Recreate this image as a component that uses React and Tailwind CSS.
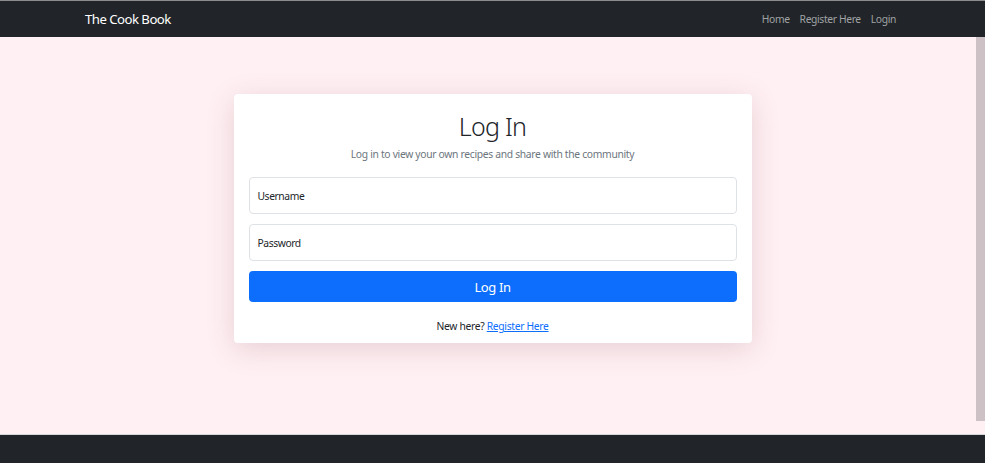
import React from "react";

export default function App() {
  return (
    <div className="relative flex h-[463px] w-[985px] flex-col overflow-hidden bg-[#fff0f3] font-['Noto_Sans',sans-serif] tracking-[-0.02em]">
      <div className="h-px bg-[#8c8c8c]" />
      <nav className="flex h-[36px] items-center justify-between bg-[#212529] pl-[85px] pr-[89px] pt-[2px]">
        <span className="text-[13.2px] tracking-[-0.04em] text-white">The Cook Book</span>
        <div className="flex gap-[10px] text-[10.3px] tracking-[-0.035em] text-[#a0a2a4]">
          <span>Home</span>
          <span>Register Here</span>
          <span>Login</span>
        </div>
      </nav>
      <main className="flex flex-1 justify-center pt-[57px]">
        <div className="flex h-[249px] w-[518px] flex-col items-center rounded-[4px] bg-white px-[15px] shadow-[0_6px_28px_rgba(120,60,80,0.18)]">
          <h1 className="mt-[16px] text-[25px] font-light leading-[32px] tracking-[-0.03em] text-[#212529]">Log In</h1>
          <p className="mt-[5px] text-[10.3px] leading-[14px] tracking-[-0.03em] text-[#6c757d]">
            Log in to view your own recipes and share with the community
          </p>
          <div className="mt-[16px] flex h-[37px] w-full items-center rounded-[4px] border border-[#dee2e6] px-[8px] pt-[2px] text-[10.3px] tracking-[-0.04em] text-[#212529]">
            Username
          </div>
          <div className="mt-[10px] flex h-[37px] w-full items-center rounded-[4px] border border-[#dee2e6] px-[8px] pt-[2px] text-[10.3px] tracking-[-0.04em] text-[#212529]">
            Password
          </div>
          <button className="mt-[10px] h-[31px] w-full rounded-[4px] bg-[#0d6efd] pt-[2px] text-[13px] tracking-[-0.03em] text-white">
            Log In
          </button>
          <p className="mt-[17px] text-[10.3px] tracking-[-0.03em] text-[#212529]">
            New here? <span className="text-[#0d6efd] underline">Register Here</span>
          </p>
        </div>
      </main>
      <div className="h-px bg-[#d6d6d8]" />
      <footer className="h-[28px] bg-[#212529]" />
      <div className="absolute right-0 top-[37px] h-[384px] w-[9px] bg-[#cdc1c5]" />
    </div>
  );
}
